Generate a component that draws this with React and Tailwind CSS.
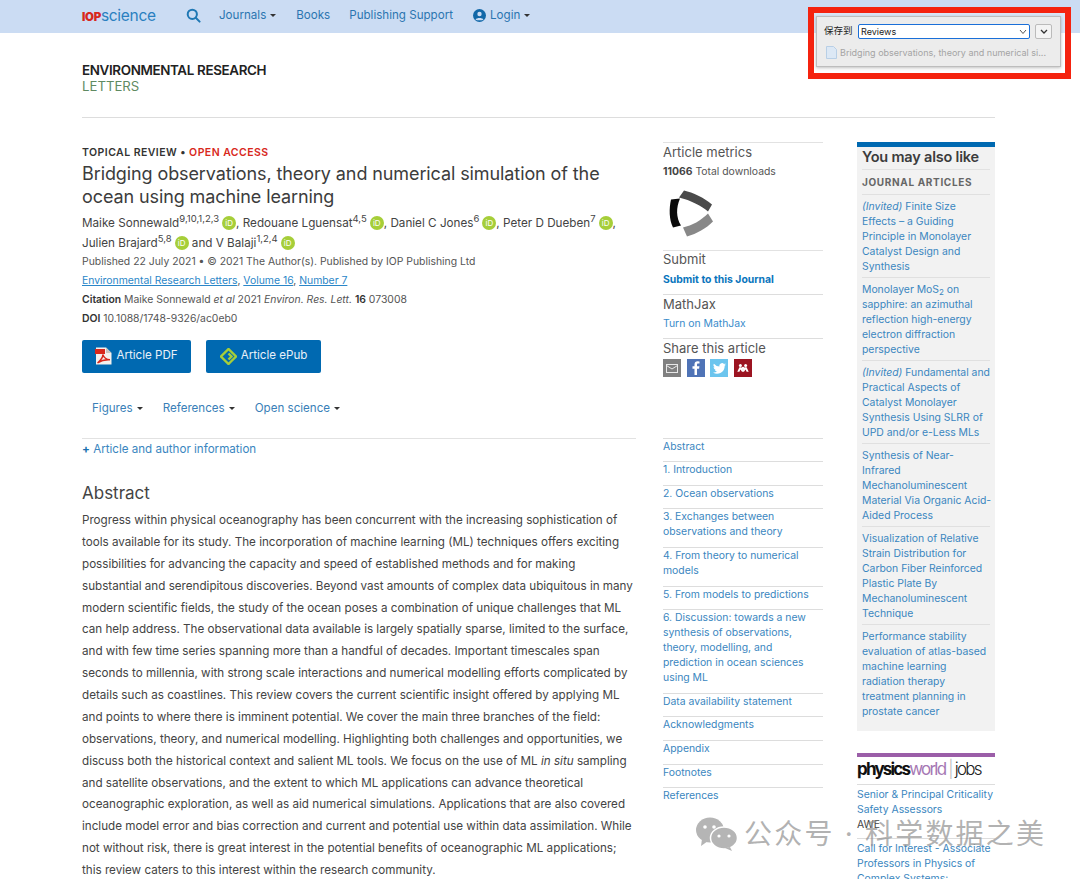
import React from "react";

const font = { fontFamily: "Inter, 'Noto Sans CJK SC', sans-serif" };

function Caret({ cls = "" }) {
  return <span className={"inline-block ml-[4px] align-middle border-x-[3px] border-x-transparent border-t-[3.5px] border-t-[#333] " + cls}></span>;
}

function Orcid() {
  return (
    <span className="inline-flex items-center justify-center w-[14px] h-[14px] rounded-full bg-[#a6ce39] text-white text-[8px] leading-none ml-[3px] align-[0.5px]">
      iD
    </span>
  );
}

const abstractLines = [
  "Progress within physical oceanography has been concurrent with the increasing sophistication of",
  "tools available for its study. The incorporation of machine learning (ML) techniques offers exciting",
  "possibilities for advancing the capacity and speed of established methods and for making",
  "substantial and serendipitous discoveries. Beyond vast amounts of complex data ubiquitous in many",
  "modern scientific fields, the study of the ocean poses a combination of unique challenges that ML",
  "can help address. The observational data available is largely spatially sparse, limited to the surface,",
  "and with few time series spanning more than a handful of decades. Important timescales span",
  "seconds to millennia, with strong scale interactions and numerical modelling efforts complicated by",
  "details such as coastlines. This review covers the current scientific insight offered by applying ML",
  "and points to where there is imminent potential. We cover the main three branches of the field:",
  "observations, theory, and numerical modelling. Highlighting both challenges and opportunities, we",
  "discuss both the historical context and salient ML tools. We focus on the use of ML @@",
  "and satellite observations, and the extent to which ML applications can advance theoretical",
  "oceanographic exploration, as well as aid numerical simulations. Applications that are also covered",
  "include model error and bias correction and current and potential use within data assimilation. While",
  "not without risk, there is great interest in the potential benefits of oceanographic ML applications;",
  "this review caters to this interest within the research community.",
];

const toc = [
  ["Abstract"],
  ["1. Introduction"],
  ["2. Ocean observations"],
  ["3. Exchanges between", "observations and theory"],
  ["4. From theory to numerical", "models"],
  ["5. From models to predictions"],
  ["6. Discussion: towards a new", "synthesis of observations,", "theory, modelling, and", "prediction in ocean sciences", "using ML"],
  ["Data availability statement"],
  ["Acknowledgments"],
  ["Appendix"],
  ["Footnotes"],
  ["References"],
];

const related = [
  [<><i>(Invited)</i> Finite Size</>, "Effects – a Guiding", "Principle in Monolayer", "Catalyst Design and", "Synthesis"],
  [<>Monolayer MoS<sub className="text-[8px] leading-none">2</sub> on</>, "sapphire: an azimuthal", "reflection high-energy", "electron diffraction", "perspective"],
  [<><i>(Invited)</i> Fundamental and</>, "Practical Aspects of", "Catalyst Monolayer", "Synthesis Using SLRR of", "UPD and/or e-Less MLs"],
  ["Synthesis of Near-", "Infrared", "Mechanoluminescent", "Material Via Organic Acid-", "Aided Process"],
  ["Visualization of Relative", "Strain Distribution for", "Carbon Fiber Reinforced", "Plastic Plate By", "Mechanoluminescent", "Technique"],
  ["Performance stability", "evaluation of atlas-based", "machine learning", "radiation therapy", "treatment planning in", "prostate cancer"],
];

function Header() {
  return (
    <div className="h-[33px] bg-[#cbdcf3] flex items-center pl-[82px] pb-[2px] text-[11.6px] text-[#2a75b0]">
      <span className="text-[15px] leading-none w-[104px] tracking-[-0.3px] whitespace-nowrap">
        <b className="text-[#d8281c] text-[11.5px] font-black">IOP</b>
        <span className="text-[#2a80c0] text-[15.5px]">science</span>
      </span>
      <svg width="15" height="15" viewBox="0 0 15 15" fill="none" stroke="#1f78b4" strokeWidth="2">
        <circle cx="6.3" cy="6.3" r="4.6" />
        <path d="M9.8 9.8 L13.6 13.6" strokeLinecap="round" />
      </svg>
      <span className="ml-[18px]">Journals<Caret /></span>
      <span className="ml-[20px]">Books</span>
      <span className="ml-[19px]">Publishing Support</span>
      <span className="ml-[20px] flex items-center">
        <svg width="13" height="13" viewBox="0 0 13 13" className="mr-[4px]">
          <circle cx="6.5" cy="6.5" r="6.5" fill="#1268a8" />
          <circle cx="6.5" cy="5" r="2.2" fill="#cbdcf3" />
          <path d="M2.6 10.4 C3.4 8.4 9.6 8.4 10.4 10.4 C9.2 11.6 3.8 11.6 2.6 10.4 Z" fill="#cbdcf3" />
        </svg>
        Login<Caret />
      </span>
    </div>
  );
}

function Main() {
  return (
    <div className="w-[554px] shrink-0">
      <div className="text-[10.5px] leading-[14px] font-semibold text-[#333] tracking-[0.45px] mt-[0.5px]">
        TOPICAL REVIEW • <span className="text-[#d8281c]">OPEN ACCESS</span>
      </div>
      <h1 className="text-[18px] leading-[23.5px] text-[#3c3c3c] mt-[2px] tracking-[-0.1px] font-normal whitespace-nowrap">
        Bridging observations, theory and numerical simulation of the<br />ocean using machine learning
      </h1>
      <div className="text-[11.7px] leading-[20px] text-[#444] mt-[4px] whitespace-nowrap">
        <div className="h-[20px]">Maike Sonnewald<sup className="text-[9.5px]">9,10,1,2,3</sup><Orcid />, Redouane Lguensat<sup className="text-[9.5px]">4,5</sup><Orcid />, Daniel C Jones<sup className="text-[9.5px]">6</sup><Orcid />, Peter D Dueben<sup className="text-[9.5px]">7</sup><Orcid />,</div>
        <div className="h-[20px]">Julien Brajard<sup className="text-[9.5px]">5,8</sup><Orcid /> and V Balaji<sup className="text-[9.5px]">1,2,4</sup><Orcid /></div>
      </div>
      <div className="text-[10.4px] leading-[19px] text-[#555] mt-[-1px] whitespace-nowrap">
        <div>Published 22 July 2021 • © 2021 The Author(s). Published by IOP Publishing Ltd</div>
        <div><u className="text-[#2a86c8]">Environmental Research Letters</u>, <u className="text-[#2a86c8]">Volume 16</u>, <u className="text-[#2a86c8]">Number 7</u></div>
        <div><b className="font-semibold text-[#333]">Citation</b> Maike Sonnewald <i>et al</i> 2021 <i>Environ. Res. Lett.</i> <b className="font-semibold text-[#333]">16</b> 073008</div>
        <div><b className="font-semibold text-[#333]">DOI</b> 10.1088/1748-9326/ac0eb0</div>
      </div>
      <div className="flex gap-[15px] mt-[12px]">
        <div className="w-[109px] h-[33px] bg-[#0069b1] rounded-[2px] flex items-center justify-center gap-[4px] text-[11.6px] text-[#e8f0f8]">
          <svg width="17" height="18" viewBox="0 0 17 18">
            <path d="M1 0.5 H11 L16.5 6 V17.5 H1 Z" fill="#f4f1ee" />
            <path d="M11 0.5 V6 H16.5 Z" fill="#c9c4c0" />
            <rect x="0" y="2" width="10" height="5" fill="#d8281c" />
            <path d="M2.5 16 C6 13 8 9.5 7.8 7.5 C9 11 11 12.5 15 12.8 C11 12.5 7 13 2.5 16 Z" fill="none" stroke="#d8281c" strokeWidth="1.4" />
          </svg>
          Article PDF
        </div>
        <div className="w-[115px] h-[33px] bg-[#0069b1] rounded-[2px] flex items-center justify-center gap-[4px] text-[11.6px] text-[#e8f0f8]">
          <svg width="17" height="17" viewBox="0 0 17 17" fill="none" stroke="#a6ce39" strokeWidth="2.4">
            <path d="M12 12.5 L8.5 16 L1 8.5 L8.5 1 L16 8.5 L9.5 15 M8.5 5.5 L11.5 8.5 L8.5 11.5" />
          </svg>
          Article ePub
        </div>
      </div>
      <div className="flex text-[11.6px] leading-[16px] text-[#3a7fb8] mt-[27px] pl-[10px] gap-[20px]">
        <span>Figures<Caret /></span>
        <span>References<Caret /></span>
        <span>Open science<Caret /></span>
      </div>
      <div className="border-t border-[#e2e2e2] mt-[22px] pt-[2.5px] text-[11.6px] leading-[16px] text-[#3a86c0]">
        <b className="text-[#1a70b0] font-bold">+</b> Article and author information
      </div>
      <h2 className="text-[17px] leading-[22px] text-[#444] font-normal mt-[24.5px]">Abstract</h2>
      <div className="text-[11.65px] leading-[21.88px] text-[#444] mt-[6.5px] whitespace-nowrap">
        {abstractLines.map((l, i) =>
          l.endsWith("@@") ? (
            <div key={i}>{l.replace("@@", "")}<i>in situ</i> sampling</div>
          ) : (
            <div key={i}>{l}</div>
          )
        )}
      </div>
    </div>
  );
}

function Side() {
  return (
    <div className="w-[160px] shrink-0 ml-[27px] -mt-[3px] text-[#555]">
      <div className="border-t border-[#e2e2e2]">
        <div className="text-[13px] leading-[18px]">Article metrics</div>
        <div className="text-[10.4px] leading-[16px] mt-[3px]"><b className="font-bold text-[#444]">11066</b> Total downloads</div>
        <svg width="44" height="47" viewBox="0 0 44 46" className="block ml-[6px] mt-[10px] mb-[13px]">
          <path d="M2 9 L11 8 C7 17 7 27 12 35 L4 37 C0 29 0 18 2 9 Z" fill="#0a0a0a" />
          <path d="M15 0 C24 2 35 7 43 14 L39 21 C32 15 22 10 10 7 Z" fill="#4a4a4a" />
          <path d="M39 23 L44 31 C37 38 28 43 18 46 L14 37 C23 35 32 30 39 23 Z" fill="#888" />
        </svg>
      </div>
      <div className="border-t border-[#e2e2e2]">
        <div className="text-[13px] leading-[18px] -mt-[1px]">Submit</div>
        <div className="text-[10.4px] leading-[16px] font-bold text-[#0a75bd] mt-[4px] mb-[6px]">Submit to this Journal</div>
      </div>
      <div className="border-t border-[#ddd]">
        <div className="text-[13px] leading-[18px]">MathJax</div>
        <div className="text-[10.4px] leading-[16px] text-[#3a8ccb] mt-[3px] mb-[6px]">Turn on MathJax</div>
      </div>
      <div className="border-t border-[#ddd]">
        <div className="text-[13px] leading-[18px]">Share this article</div>
        <div className="flex gap-[5.7px] mt-[2px]">
          <span className="w-[18px] h-[18px] bg-[#808080] flex items-center justify-center">
            <svg width="12" height="9" viewBox="0 0 12 9" fill="none" stroke="#e8e8e8" strokeWidth="1">
              <rect x="0.5" y="0.5" width="11" height="8" />
              <path d="M0.5 1.5 L6 5 L11.5 1.5" />
            </svg>
          </span>
          <span className="w-[18px] h-[18px] bg-[#4f73b6] flex items-center justify-center">
            <svg width="8" height="14" viewBox="0 0 8 14" fill="#fff">
              <path d="M2.5 14 V7.7 H0.5 V5.3 H2.5 V3.6 C2.5 1.4 3.8 0.3 5.6 0.3 L7.5 0.4 V2.6 H6.2 C5.2 2.6 5 3.1 5 3.8 V5.3 H7.4 L7.1 7.7 H5 V14 Z" />
            </svg>
          </span>
          <span className="w-[18px] h-[18px] bg-[#6cc5ee] flex items-center justify-center">
            <svg width="13" height="11" viewBox="0 0 24 20" fill="#fff">
              <path d="M24 2.4 a9.8 9.8 0 0 1-2.8.8 a4.9 4.9 0 0 0 2.2-2.7 a9.8 9.8 0 0 1-3.1 1.2 a4.9 4.9 0 0 0-8.4 4.5 A14 14 0 0 1 1.7 1 a4.9 4.9 0 0 0 1.5 6.6 a4.9 4.9 0 0 1-2.2-.6 a4.9 4.9 0 0 0 3.9 4.9 a4.9 4.9 0 0 1-2.2.1 a4.9 4.9 0 0 0 4.6 3.4 A9.9 9.9 0 0 1 0 17.4 a14 14 0 0 0 21.5-12.4 A10 10 0 0 0 24 2.4 Z" />
            </svg>
          </span>
          <span className="w-[18px] h-[18px] bg-[#9c1421] flex items-center justify-center">
            <svg width="12" height="8" viewBox="0 0 12 8" fill="#fff">
              <circle cx="3.4" cy="1.6" r="1.5" />
              <circle cx="8.6" cy="1.6" r="1.5" />
              <circle cx="6" cy="4" r="1.2" />
              <path d="M0.3 7.8 L2.4 3.2 L4.4 3.2 L6 5.6 L7.6 3.2 L9.6 3.2 L11.7 7.8 L9.6 7.8 L8.6 5.6 L7 7.8 L5 7.8 L3.4 5.6 L2.4 7.8 Z" />
            </svg>
          </span>
        </div>
      </div>
      <div className="mt-[60.6px] text-[10.4px] leading-[15px] text-[#3a86c0]">
        {toc.map((lines, i) => (
          <div key={i} className="border-t border-[#ddd] pb-[7.6px] whitespace-nowrap">
            {lines.map((l, j) => <div key={j}>{l}</div>)}
          </div>
        ))}
      </div>
    </div>
  );
}

function Related() {
  return (
    <div className="w-[138px] shrink-0 ml-[34px] -mt-[3px]">
      <div className="bg-[#f2f2f2] border-t-[5px] border-[#0069b1] h-[589px] px-[5px]">
        <div className="text-[14.5px] leading-[20px] font-semibold text-[#3c3c3c] tracking-[-0.2px] whitespace-nowrap">You may also like</div>
        <div className="border-t border-[#e2e2e2] mt-[2px] text-[10px] leading-[15px] font-bold text-[#666] tracking-[0.65px] pt-[5px] pb-[4px] whitespace-nowrap">JOURNAL ARTICLES</div>
        <div className="text-[10.4px] leading-[15px] text-[#3a86c0] whitespace-nowrap">
          {related.map((lines, i) => (
            <div key={i} className="border-t border-[#e0e0e0] pt-[4px] pb-[3px]">
              {lines.map((l, j) => <div key={j}>{l}</div>)}
            </div>
          ))}
        </div>
      </div>
      <div className="mt-[22px] border-t-[4px] border-[#9b5ea8]">
        <div className="h-[28px] flex items-center border-b border-[#ddd] text-[17px] tracking-[-1.8px] leading-none whitespace-nowrap pb-[3px]">
          <b className="text-[#111] font-bold">physics</b>
          <span className="text-[#a678b4]">world</span>
          <span className="text-[#bbb] ml-[3px] mr-[3px] font-light">|</span>
          <span className="text-[#222] font-light">jobs</span>
        </div>
        <div className="text-[10.4px] leading-[15px] text-[#3a86c0] whitespace-nowrap pt-[2px]">
          <div>Senior &amp; Principal Criticality</div>
          <div>Safety Assessors</div>
          <div className="text-[#444] mb-[6px]">AWE</div>
          <div className="border-t border-[#ddd] pt-[1.5px]">
            <div>Call for Interest - Associate</div>
            <div>Professors in Physics of</div>
            <div>Complex Systems:</div>
          </div>
        </div>
      </div>
    </div>
  );
}

export default function App() {
  return (
    <div style={font} className="relative w-[1080px] h-[879px] overflow-hidden bg-white">
      <Header />
      <div className="pl-[82px] pt-[29px] h-[55px] box-content">
        <div className="text-[13.4px] leading-[16px] font-semibold text-[#222] tracking-[-0.35px] whitespace-nowrap">ENVIRONMENTAL RESEARCH</div>
        <div className="text-[13.2px] leading-[15px] mt-[1px] text-[#5f8a62]">LETTERS</div>
      </div>
      <div className="ml-[82px] w-[913px] border-t border-[#ddd]"></div>
      <div className="flex pl-[82px] pt-[27px]">
        <Main />
        <Side />
        <Related />
      </div>

      {/* save dialog callout */}
      <div className="absolute left-[808px] top-[7px] w-[263px] h-[72px] border-[6px] border-[#f5230f] bg-white/30 z-10">
        <div className="absolute left-[2px] top-[3px] w-[245px] h-[51px] bg-[#ececec] border border-[#bdbdbd] shadow-[0_1px_3px_rgba(0,0,0,0.25)]">
          <div className="flex items-center h-[29px] pl-[7px]">
            <span className="text-[9.5px] text-[#222] w-[34px] whitespace-nowrap">保存到</span>
            <div className="w-[172px] h-[15px] bg-white border-[1.5px] border-[#1a6fd8] rounded-[2px] flex items-center justify-between pl-[2px] pr-[2px] text-[9px] text-[#222]">
              Reviews
              <svg width="8" height="6" viewBox="0 0 8 6" fill="none" stroke="#555" strokeWidth="1"><path d="M1 1 L4 4.5 L7 1" /></svg>
            </div>
            <div className="ml-[5px] w-[17px] h-[15px] bg-[#f4f4f4] border border-[#bbb] rounded-[2px] flex items-center justify-center">
              <svg width="8" height="6" viewBox="0 0 8 6" fill="none" stroke="#333" strokeWidth="1.3"><path d="M1 1 L4 4 L7 1" /></svg>
            </div>
          </div>
          <div className="flex items-center pl-[9px] gap-[3px] text-[9px] text-[#a4a4a4] whitespace-nowrap">
            <svg width="11" height="13" viewBox="0 0 11 13"><path d="M0.5 0.5 H7.5 L10.5 3.5 V12.5 H0.5 Z" fill="#dce8f5" stroke="#b8cfe6" /></svg>
            Bridging observations, theory and numerical si...
          </div>
        </div>
      </div>

      {/* watermark */}
      <div className="absolute left-[696px] top-[817px] h-[34px] flex items-center z-10 text-[#8f8f8f]/70 text-[28px] leading-none whitespace-nowrap pointer-events-none">
        <svg width="42" height="34" viewBox="0 0 42 34" className="mr-[6px]">
          <ellipse cx="14" cy="13" rx="14" ry="12.5" fill="#b5b5b5" />
          <path d="M6 22 L5 29 L12 24 Z" fill="#b5b5b5" />
          <ellipse cx="28" cy="21" rx="13.5" ry="11" fill="#b5b5b5" stroke="#fff" strokeWidth="1.5" />
          <path d="M34 30 L36 34 L29 31 Z" fill="#b5b5b5" />
          <circle cx="9" cy="10" r="1.8" fill="#fff" />
          <circle cx="18" cy="10" r="1.8" fill="#fff" />
          <circle cx="23" cy="19" r="1.6" fill="#fff" />
          <circle cx="33" cy="19" r="1.6" fill="#fff" />
        </svg>
        <span className="tracking-[2.2px]">公众号 · 科学数据之美</span>
      </div>
    </div>
  );
}
